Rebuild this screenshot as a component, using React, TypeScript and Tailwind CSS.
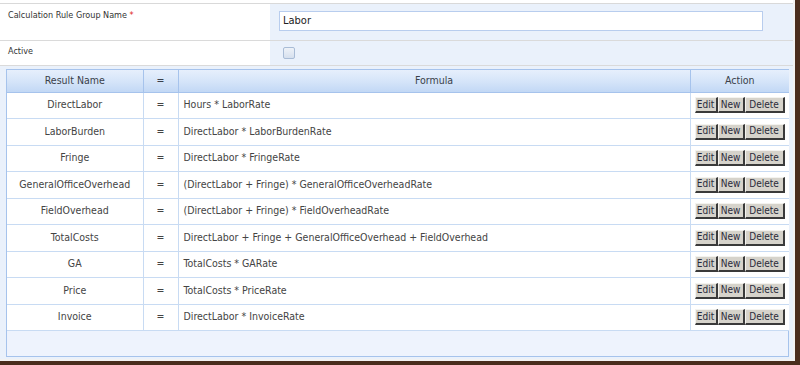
const rows = [
  { name: "DirectLabor", formula: "Hours * LaborRate" },
  { name: "LaborBurden", formula: "DirectLabor * LaborBurdenRate" },
  { name: "Fringe", formula: "DirectLabor * FringeRate" },
  { name: "GeneralOfficeOverhead", formula: "(DirectLabor + Fringe) * GeneralOfficeOverheadRate" },
  { name: "FieldOverhead", formula: "(DirectLabor + Fringe) * FieldOverheadRate" },
  { name: "TotalCosts", formula: "DirectLabor + Fringe + GeneralOfficeOverhead + FieldOverhead" },
  { name: "GA", formula: "TotalCosts * GARate" },
  { name: "Price", formula: "TotalCosts * PriceRate" },
  { name: "Invoice", formula: "DirectLabor * InvoiceRate" },
]

function Btn({ label, w }: { label: string; w: string }) {
  return (
    <button
      className={`${w} h-[16px] bg-[#d6d3cb] border border-t-[#f4f3ef] border-l-[#f4f3ef] border-r-[#3a3a3a] border-b-[#3a3a3a] border-r-2 border-b-2 text-[10px] leading-[12px] text-[#2a2a3a] px-0`}
    >
      {label}
    </button>
  )
}

export default function App() {
  return (
    <div className="w-[800px] h-[365px] bg-[#4a2d1d] font-['DejaVu_Sans_Condensed','DejaVu_Sans',sans-serif] text-[10.5px] text-[#444]">
      <div className="w-[795px] h-[361px] bg-white pt-[3px] border-r-2 border-b-2 border-[#f2f2f2] flex flex-col">
        <div className="border-t border-[#d9d9d9] flex flex-col flex-1">
          {/* name row */}
          <div className="grid grid-cols-[270px_1fr] h-[37px] border-b border-[#dadada]">
            <div className="pl-[8px] pt-[5px] text-[9px] text-[#333]">
              Calculation Rule Group Name <span className="text-[#e02020] text-[9px] align-top">*</span>
            </div>
            <div className="bg-[#eaf1fb] pl-[9px] pt-[7px]">
              <div className="w-[484px] h-[20px] bg-white border border-[#b8cdee] pl-[3px] text-[11px] leading-[18px] text-[#222]">
                Labor
              </div>
            </div>
          </div>

          {/* active row */}
          <div className="grid grid-cols-[270px_1fr] h-[25px] border-b border-[#dadada]">
            <div className="pl-[8px] pt-[4px] text-[9px] text-[#333]">Active</div>
            <div className="bg-[#eaf1fb] pl-[13px] pt-[6px]">
              <div className="w-[12px] h-[12px] rounded-[2px] border border-[#a9bcd6] bg-gradient-to-b from-[#eef2f8] to-[#d6e0ee]" />
            </div>
          </div>

          {/* rules grid */}
          <div className="flex-1 bg-[#eaf1fb] px-[6px] pt-[3px]">
            <div className="w-[783px] border border-[#a6c3ec] bg-[#eef3fd]">
              <table className="w-full border-collapse table-fixed">
                <colgroup>
                  <col className="w-[136px]" />
                  <col className="w-[35px]" />
                  <col className="w-[512px]" />
                  <col className="w-[99px]" />
                </colgroup>
                <thead>
                  <tr className="h-[22px] bg-gradient-to-b from-[#e6effc] via-[#d6e5f9] to-[#c2d8f5] text-[#3a3f4a]">
                    <th className="font-normal text-center border-r border-b border-[#a6c3ec]">Result Name</th>
                    <th className="font-normal text-center border-r border-b border-[#a6c3ec]">=</th>
                    <th className="font-normal text-center border-r border-b border-[#a6c3ec]">Formula</th>
                    <th className="font-normal text-center border-b border-[#a6c3ec]">Action</th>
                  </tr>
                </thead>
                <tbody>
                  {rows.map((r) => (
                    <tr key={r.name} className="h-[26.5px] bg-white">
                      <td className="text-center border-r border-b border-[#c8dbf3]">{r.name}</td>
                      <td className="text-center border-r border-b border-[#c8dbf3]">=</td>
                      <td className="pl-[5px] border-r border-b border-[#c8dbf3]">{r.formula}</td>
                      <td className="pl-[4px] border-b border-[#c8dbf3]">
                        <div className="flex">
                          <Btn label="Edit" w="w-[23px]" />
                          <Btn label="New" w="w-[27px]" />
                          <Btn label="Delete" w="w-[40px]" />
                        </div>
                      </td>
                    </tr>
                  ))}
                </tbody>
              </table>
              <div className="h-[25px]" />
            </div>
          </div>
        </div>
      </div>
    </div>
  )
}
